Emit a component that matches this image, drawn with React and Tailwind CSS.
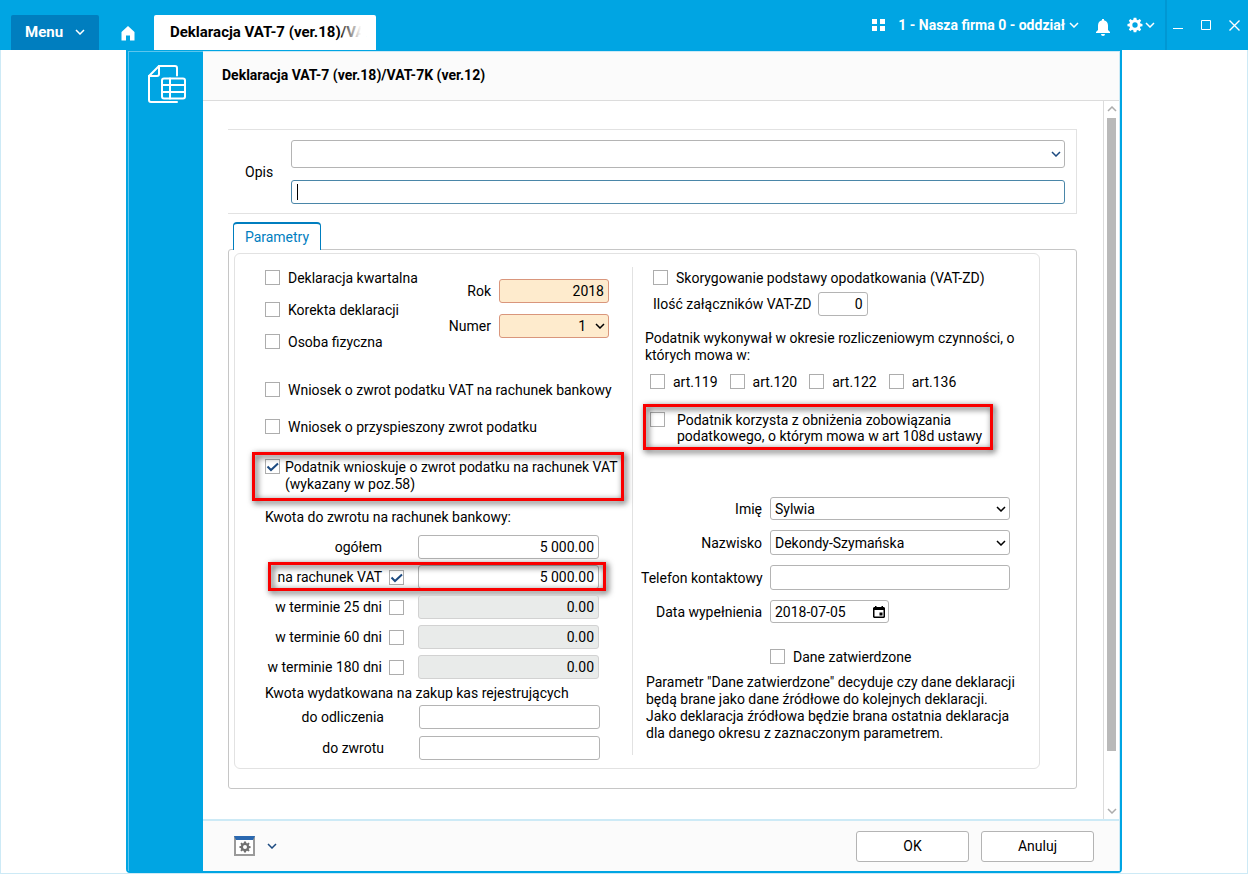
import React, { useState } from 'react'

const inputBase = 'min-w-0 rounded-[3px] border border-[#b4b4b4] bg-white px-1 text-black outline-none'

const Chevron = ({ className = '' }) => (
  <svg className={className} width="10" height="6" viewBox="0 0 10 6" fill="none" stroke="currentColor" aria-hidden="true">
    <path d="M1 1l4 4 4-4" strokeWidth="1.5" />
  </svg>
)

const Box = ({ checked, onChange, id, label }) => (
  <span className="relative block size-[15px] shrink-0">
    <input
      id={id}
      type="checkbox"
      aria-label={label}
      checked={checked}
      onChange={onChange}
      className="peer block size-[15px] appearance-none border border-[#adadad] bg-white"
    />
    <svg
      className="pointer-events-none absolute inset-0 hidden text-[#1c4a80] peer-checked:block"
      width="15" height="15" viewBox="0 0 15 15" fill="none" stroke="currentColor" strokeWidth="2"
    >
      <path d="M2.500 7.500l3.500 3.500 7-6.500" />
    </svg>
  </span>
)

const Check = ({ children, defaultChecked = false, className = 'gap-2' }) => {
  const [checked, setChecked] = useState(defaultChecked)
  return (
    <label className={`flex items-start whitespace-nowrap ${className}`}>
      <Box checked={checked} onChange={() => setChecked(!checked)} />
      <span>{children}</span>
    </label>
  )
}

const Select = ({ id, options, className, label, selectClass = '', arrowClass = 'right-1' }) => (
  <div className={`relative flex items-center ${className}`}>
    <select id={id} aria-label={label} className={`h-full w-full appearance-none ${inputBase} ${selectClass}`}>
      {options.map(o => <option key={o}>{o}</option>)}
    </select>
    <Chevron className={`pointer-events-none absolute ${arrowClass}`} />
  </div>
)

// Red frame laid over the fields that need attention
const Highlight = ({ className }) => (
  <div className={`pointer-events-none absolute border-[3px] border-[#f90000] drop-shadow-[2px_2px_3px_rgba(0,0,0,0.8)] ${className}`} />
)

const amounts = [
  { id: 'ogolem',   label: 'ogółem',           value: '5 000.00' },
  { id: 'rachunek', label: 'na rachunek VAT',  value: '5 000.00', check: true, checked: true, marked: true },
  { id: 'dni25',    label: 'w terminie 25 dni',  value: '0.00', check: true },
  { id: 'dni60',    label: 'w terminie 60 dni',  value: '0.00', check: true },
  { id: 'dni180',   label: 'w terminie 180 dni', value: '0.00', check: true },
]

const AmountRow = ({ id, label, value, check, checked: initial = false, marked }) => {
  const [checked, setChecked] = useState(initial)
  const disabled = check && !checked
  return (
    <div className="relative flex h-6 items-center">
      <label htmlFor={id} className="w-[117px] shrink-0 whitespace-nowrap text-right">{label}</label>
      <div className="mr-[14px] ml-[7px] w-[15px]">
        {check && <Box checked={checked} label={label} onChange={() => setChecked(!checked)} />}
      </div>
      <input
        id={id}
        defaultValue={value}
        disabled={disabled}
        className={`h-6 w-[181px] text-right ${inputBase} disabled:border-[#d2d2d2] disabled:bg-[#e9ebea]`}
      />
      {marked && <Highlight className="-top-[3px] -bottom-0.5 left-[3px] right-[26px]" />}
    </div>
  )
}

const Gear = ({ size }) => (
  <svg width={size} height={size} viewBox="0 0 24 24" fill="currentColor" fillRule="evenodd" aria-hidden="true">
    <path d="M10 1h4l.6 3 1.800.8L19 3.100 21.300 5.500 19.400 8l.8 1.900 3 .6v3.300l-3 .6-.8 1.800 1.800 2.600-2.300 2.400-2.600-1.800-1.800.8L14 23h-4l-.6-3-1.800-.8L5 21.100l-2.300-2.400 1.800-2.600-.8-1.800-3-.6v-3.300l3-.6L4.500 8 2.700 5.500 5 3.100l2.600 1.700L9.400 4zM12 8a4 4 0 1 0 0 8 4 4 0 0 0 0-8z" />
  </svg>
)

const Header = () => (
  <header className="flex h-[50px] shrink-0 items-end bg-[#00a5e3] text-white">
    <button className="ml-[11px] flex h-[35px] w-[88px] items-center justify-between rounded-t-xs bg-[#007ebf] px-[14px] pb-0.5 text-[15px] font-bold">
      Menu
      <Chevron />
    </button>
    <button className="ml-[21px] h-[35px]" aria-label="Start">
      <svg width="16" height="16" viewBox="0 0 16 16" fill="currentColor">
        <path d="M8 1l6.500 6v8.500H10V10.500H6v5H1.500V7z" />
      </svg>
    </button>
    <div className="ml-[18px] flex h-[35px] w-[222px] items-center rounded-t-xs bg-white px-4 pb-0.5 text-[15px] font-bold text-black">
      <div className="relative whitespace-nowrap">
        Deklaracja VAT-7 (ver.18)/VA
        <div className="absolute inset-y-0 right-0 w-6 bg-gradient-to-r from-white/20 to-white to-80%" />
      </div>
    </div>
    <div className="ml-auto flex h-[50px] items-center">
      <button aria-label="Moduły">
        <svg width="14" height="12" viewBox="0 0 14 12" fill="currentColor">
          <path d="M0 0h5v5H0zM8 0h5v5H8zM0 7h5v5H0zM8 7h5v5H8z" />
        </svg>
      </button>
      <button className="ml-3 flex items-center gap-1 text-sm font-bold">
        1 - Nasza firma 0 - oddział
        <Chevron />
      </button>
      <button className="ml-4 pt-1" aria-label="Powiadomienia">
        <svg width="16" height="18" viewBox="0 0 16 18" fill="currentColor">
          <path d="M7 1h2v1.300c2.600.6 4 2.600 4 5.200V12l2 2v1H1v-1l2-2V7.500c0-2.600 1.400-4.600 4-5.200zM6 16h4a2 2 0 0 1-4 0z" />
        </svg>
      </button>
      <button className="ml-4 flex items-center gap-0.5" aria-label="Ustawienia">
        <Gear size={16} />
        <Chevron />
      </button>
      <div className="ml-[10px] flex h-full items-center gap-[17px] border-l-2 border-[#0097d3] pr-2 pl-[6px]">
        <button aria-label="Minimalizuj">
          <svg width="11" height="11" viewBox="0 0 11 11" stroke="currentColor"><path d="M0 8.500h10" /></svg>
        </button>
        <button aria-label="Maksymalizuj">
          <svg width="11" height="11" viewBox="0 0 11 11" stroke="currentColor" fill="none"><path d="M.5.500h9v9H.500z" /></svg>
        </button>
        <button aria-label="Zamknij">
          <svg width="11" height="11" viewBox="0 0 11 11" stroke="currentColor" strokeWidth="1.400"><path d="M.5.500l10 10M10.500.500l-10 10" /></svg>
        </button>
      </div>
    </div>
  </header>
)

const Sidebar = () => (
  <aside className="w-[75px] shrink-0 border-t border-l border-[#5cc5ed] bg-[#00a5e3] pt-[13px] pl-[18px] text-white">
    <svg width="40" height="40" viewBox="0 0 40 40" fill="none" stroke="currentColor" strokeWidth="2" strokeLinejoin="round" strokeLinecap="round">
      <path d="M30 10.500V3a2 2 0 0 0-2-2H12L2 11V35a2 2 0 0 0 2 2H30" />
      <path d="M12 1v8a2 2 0 0 1-2 2H2" />
      <rect x="15" y="13.500" width="23" height="20" rx="2" />
      <path d="M15 20h23M15 27h23M23 13.500v20" />
    </svg>
  </aside>
)

const LeftColumn = () => (
  <div className="w-[397px] shrink-0 pt-4 pl-[30px]">
    <div className="flex justify-between pr-[23px]">
      <div className="flex flex-col gap-4">
        <Check>Deklaracja kwartalna</Check>
        <Check>Korekta deklaracji</Check>
        <Check>Osoba fizyczna</Check>
      </div>
      <div className="grid grid-cols-[auto_110px] items-center gap-x-2 gap-y-[11px] self-start pt-[9px] text-right">
        <label htmlFor="rok">Rok</label>
        <input id="rok" defaultValue="2018" className="h-6 w-full rounded-[3px] border border-[#d9967c] bg-[#feebcd] px-1 text-right outline-none" />
        <label htmlFor="numer">Numer</label>
        <div className="relative flex items-center">
          <select id="numer" className="h-6 w-full appearance-none rounded-[3px] border border-[#d9967c] bg-[#feebcd] pr-[22px] text-right [text-align-last:right] outline-none">
            <option>1</option>
            <option>2</option>
          </select>
          <Chevron className="pointer-events-none absolute right-1" />
        </div>
      </div>
    </div>

    <div className="mt-8 flex flex-col gap-[21px]">
      <Check>Wniosek o zwrot podatku VAT na rachunek bankowy</Check>
      <Check>Wniosek o przyspieszony zwrot podatku</Check>
    </div>

    <div className="relative mt-6 leading-[17px]">
      <Check defaultChecked className="gap-[5px]">
        Podatnik wnioskuje o zwrot podatku na rachunek VAT<br />
        (wykazany w poz.58)
      </Check>
      <Highlight className="-top-[7px] -bottom-2 -left-[13px] right-2" />
    </div>

    <p className="mt-4">Kwota do zwrotu na rachunek bankowy:</p>
    <div className="mt-[10px] flex flex-col gap-1.5">
      {amounts.map(a => <AmountRow key={a.id} {...a} />)}
    </div>

    <p className="mt-1.5">Kwota wydatkowana na zakup kas rejestrujących</p>
    <div className="mt-1 grid grid-cols-[119px_181px] items-center gap-x-[35px] gap-y-[7px] text-right">
      <label htmlFor="odliczenie">do odliczenia</label>
      <input id="odliczenie" className={`h-6 text-right ${inputBase}`} />
      <label htmlFor="zwrot">do zwrotu</label>
      <input id="zwrot" className={`h-6 text-right ${inputBase}`} />
    </div>
  </div>
)

const RightColumn = () => (
  <div className="min-w-0 flex-1 pt-4 pl-3">
    <div className="pl-2">
      <Check>Skorygowanie podstawy opodatkowania (VAT-ZD)</Check>
      <div className="mt-1.5 flex items-center gap-1.5">
        <label htmlFor="ilosc">Ilość załączników VAT-ZD</label>
        <input id="ilosc" defaultValue="0" className={`h-6 w-[50px] text-right ${inputBase}`} />
      </div>
    </div>

    <p className="mt-[14px] w-[375px] leading-[17px]">
      Podatnik wykonywał w okresie rozliczeniowym czynności, o których mowa w:
    </p>
    <div className="mt-[10px] flex gap-3 pl-[5px]">
      <Check>art.119</Check>
      <Check>art.120</Check>
      <Check>art.122</Check>
      <Check>art.136</Check>
    </div>

    <div className="relative mt-[22px] w-[348px] pl-[5px]">
      <Check className="gap-3">
        Podatnik korzysta z obniżenia zobowiązania<br />
        podatkowego, o którym mowa w art 108d ustawy
      </Check>
      <Highlight className="-top-2 -bottom-1.5 -left-0.5 right-0" />
    </div>

    <div className="-ml-1 mt-[53px] grid grid-cols-[121px_240px] items-center gap-x-2 gap-y-[10px]">
      <label htmlFor="imie" className="text-right">Imię</label>
      <Select id="imie" options={['Sylwia']} className="h-[23px]" />
      <label htmlFor="nazwisko" className="text-right">Nazwisko</label>
      <Select id="nazwisko" options={['Dekondy-Szymańska']} className="h-[25px]" />
      <label htmlFor="telefon" className="whitespace-nowrap text-right">Telefon kontaktowy</label>
      <input id="telefon" type="tel" className={`h-[25px] ${inputBase}`} />
      <label htmlFor="data" className="text-right">Data wypełnienia</label>
      <div className="relative flex w-[119px] items-center">
        <input id="data" defaultValue="2018-07-05" className={`h-[23px] w-full ${inputBase}`} />
        <button type="button" className="absolute right-1" aria-label="Kalendarz">
          <svg width="12" height="12" viewBox="0 0 12 12" fill="currentColor" fillRule="evenodd">
            <path d="M2 0h1.500v1h5V0H10v1h1l1 1v9l-1 1H1l-1-1V2l1-1h1zM1.500 4v6.500h9V4zM6.500 6.500h3v3h-3z" />
          </svg>
        </button>
      </div>
    </div>

    <div className="mt-[26px] pl-[125px]">
      <Check>Dane zatwierdzone</Check>
    </div>
    <p className="mt-[9px] w-[375px] pl-px leading-[17px]">
      Parametr "Dane zatwierdzone" decyduje czy dane deklaracji będą brane jako dane źródłowe do kolejnych deklaracji.<br />
      Jako deklaracja źródłowa będzie brana ostatnia deklaracja dla danego okresu z zaznaczonym parametrem.
    </p>
  </div>
)

const Scrollbar = () => (
  <div className="flex w-4 shrink-0 flex-col items-center border-l border-[#dcdcdc] py-[5px] text-[#adadad]" aria-hidden="true">
    <Chevron className="rotate-180" />
    <div className="mt-1.5 mb-[57px] w-[9px] flex-1 bg-[#b9b9b9]" />
    <Chevron />
  </div>
)

const App = () => (
  <div className="flex min-h-screen flex-col bg-white font-['Roboto','Noto_Sans',sans-serif] text-sm leading-4 text-black">
    <Header />
    <div className="flex flex-1 border-x border-b border-[#cdeaf6] px-[125px]">
      <div className="flex flex-1 rounded-b-sm border-x-2 border-t border-b-2 border-[#00a5e3] bg-[#00a5e3]">
        <Sidebar />
        <main className="flex min-w-0 flex-1 flex-col border-t border-r border-[#cdeaf6] bg-white">
          <div className="flex h-[49px] shrink-0 items-center border-b border-[#dcdcdc] bg-[#fbfbfb] px-[19px] pb-0.5">
            <h1 className="text-sm font-bold">Deklaracja VAT-7 (ver.18)/VAT-7K (ver.12)</h1>
          </div>

          <div className="flex flex-1">
            <form className="min-w-0 flex-1 pt-7 pr-[26px] pb-[29px] pl-[25px]" onSubmit={e => e.preventDefault()}>
              <div className="flex items-center border-y border-r border-[#e2e2e2] pt-[10px] pr-[11px] pb-[9px] pl-[17px]">
                <label htmlFor="opis" className="w-[46px]">Opis</label>
                <div className="flex flex-1 flex-col gap-3">
                  <Select label="Wzorzec opisu" options={['']} className="h-[28px]" arrowClass="right-1 text-[#1c4a80]" />
                  <div className="relative flex">
                    <input id="opis" className="h-6 w-full rounded-[3px] border border-[#4a86a8] px-1 outline-none" />
                    <span className="absolute top-1 left-[6px] h-4 w-px bg-black" />
                  </div>
                </div>
              </div>

              <div role="tablist" className="mt-2 flex pl-[5px]">
                <button type="button" role="tab" aria-selected="true" className="relative -mb-px h-7 w-[88px] rounded-t border-x border-t-2 border-[#007ebf] bg-white text-[#007ebf]">
                  Parametry
                </button>
              </div>
              <div className="rounded-[3px] border border-[#c6c6c6] pt-[3px] pr-9 pb-[19px] pl-[5px]">
                <div className="flex rounded-md border border-[#e2e2e2] pb-2">
                  <LeftColumn />
                  <div className="mt-[13px] mb-[5px] w-px bg-[#e2e2e2]" />
                  <RightColumn />
                </div>
              </div>
            </form>
            <Scrollbar />
          </div>

          <footer className="flex h-[52px] shrink-0 items-center gap-3 border-t-2 border-[#cdeaf6] bg-[#fbfbfb] pr-[25px] pl-[31px]">
            <button className="flex items-center gap-3 text-[#1c4a80]" aria-label="Opcje formularza">
              <span className="flex h-5 w-[21px] items-end justify-center border-2 border-t-4 border-[#9a9a9a] border-t-[#2a68b0] bg-white pb-px text-[#707070]">
                <Gear size={12} />
              </span>
              <Chevron />
            </button>
            <button className="ml-auto h-[31px] w-[113px] rounded-[3px] border border-[#b4b4b4] bg-white">OK</button>
            <button className="h-[31px] w-[113px] rounded-[3px] border border-[#b4b4b4] bg-white">Anuluj</button>
          </footer>
        </main>
      </div>
    </div>
  </div>
)

export default App
